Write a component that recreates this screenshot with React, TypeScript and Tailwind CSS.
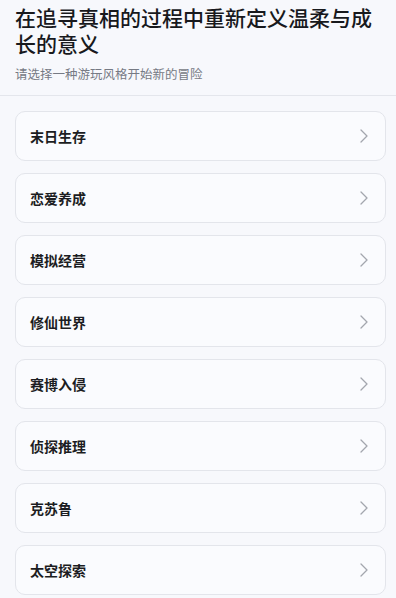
import { ChevronRight } from "lucide-react";

const styles = [
  "末日生存",
  "恋爱养成",
  "模拟经营",
  "修仙世界",
  "赛博入侵",
  "侦探推理",
  "克苏鲁",
  "太空探索"
];

export default function App() {
  return (
    <div
      className="h-screen overflow-hidden bg-[#f7f8fc] text-[#15161a]"
      style={{ fontFamily: '"Noto Sans CJK SC", "Noto Sans", sans-serif' }}
    >
      <header className="border-b border-[#e4e6ec] px-[15px] pb-[12px] pt-[4px]">
        <h1 className="text-[21px] font-medium leading-[26px] text-[#18191d]">
          在追寻真相的过程中重新定义温柔与成长的意义
        </h1>
        <p className="mt-[9px] text-[12.5px] leading-[18px] text-[#767a84]">
          请选择一种游玩风格开始新的冒险
        </p>
      </header>

      <div className="flex flex-col gap-[12px] pl-[15px] pr-[10px] pt-[15px] pb-6">
        {styles.map((name) => (
          <button
            key={name}
            type="button"
            className="flex h-[50px] w-full items-center justify-between rounded-[10px] border border-[#e3e5eb] bg-[#fafbfe] pl-[14px] pr-[9px] text-left"
          >
            <span className="text-[14px] font-semibold text-[#1c1d22]">{name}</span>
            <ChevronRight className="h-6 w-6 text-[#a3a6ae]" strokeWidth={1.3} />
          </button>
        ))}
      </div>
    </div>
  );
}
